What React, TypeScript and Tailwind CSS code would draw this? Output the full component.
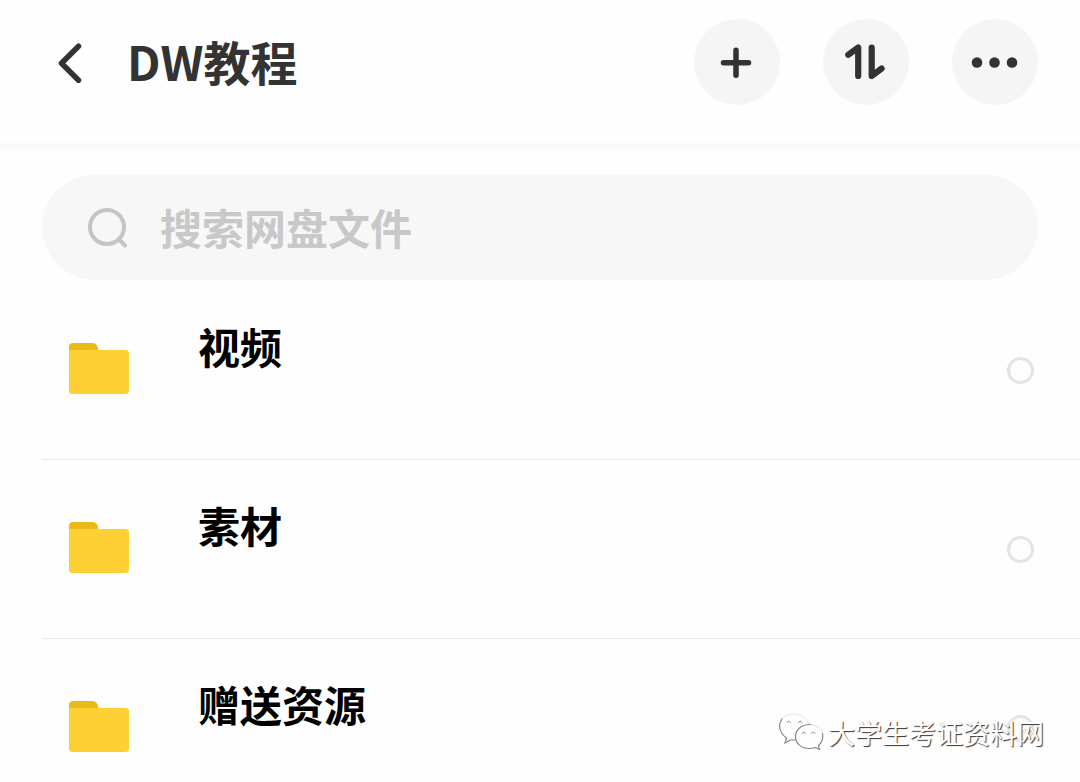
import { useState } from "react";

const folders = ["视频", "素材", "赠送资源"];

function FolderIcon() {
  return (
    <svg width="62" height="52" viewBox="0 0 62 52" className="mb-[3px] shrink-0">
      <path d="M1 14V4a4 4 0 0 1 4-4h19c3 0 4.500 1.200 5.500 3.500L32 14z" fill="#ebba16" />
      <path d="M1 7h56.500a3.500 3.500 0 0 1 3.500 3.500V47.500a3.500 3.500 0 0 1-3.500 3.500h-53A3.500 3.500 0 0 1 1 47.500z" fill="#ffd033" />
    </svg>
  );
}

function Header() {
  return (
    <header className="flex h-[142px] shrink-0 items-start justify-between pl-[53px] pr-[42px] pt-[19px]">
      <div className="flex h-[86px] items-center">
        <button type="button" className="mt-[2px]">
          <svg width="36" height="44" viewBox="0 0 36 44" fill="none" stroke="#333" strokeWidth="5.500" strokeLinecap="round" strokeLinejoin="round">
            <path d="M25.500 5.200 8.500 22.200l17 17" />
          </svg>
        </button>
        <h1 className="mb-[3px] ml-[38px] text-[47px] leading-none font-bold text-[#333]">DW教程</h1>
      </div>
      <div className="flex gap-[43px]">
        <button type="button" className="size-[86px] rounded-full bg-[#f5f5f5]">
          <svg width="86" height="86" viewBox="0 0 86 86" fill="none" stroke="#333" strokeWidth="5.500" strokeLinecap="round">
            <path d="M29.500 43.700h25M42 31.200v25" />
          </svg>
        </button>
        <button type="button" className="size-[86px] rounded-full bg-[#f5f5f5]">
          <svg width="86" height="86" viewBox="0 0 86 86" fill="none" stroke="#333" strokeWidth="6.200" strokeLinecap="round" strokeLinejoin="round">
            <path d="M25.300 35.800l9.900-7.300v28.500M48.700 28.500v28.500l9.900-7.500" />
          </svg>
        </button>
        <button type="button" className="size-[86px] rounded-full bg-[#f5f5f5]">
          <svg width="86" height="86" viewBox="0 0 86 86" fill="#333">
            <circle cx="25" cy="43.500" r="5.300" />
            <circle cx="42.500" cy="43.500" r="5.300" />
            <circle cx="60" cy="43.500" r="5.300" />
          </svg>
        </button>
      </div>
    </header>
  );
}

function WechatMark() {
  // faint outer contour, darker on the lower-left edges
  return (
    <svg width="52" height="46" viewBox="0 0 52 46" fill="none" strokeLinecap="round">
      <path d="M10 9C13 5.500 17 4 21.500 4 29 4 35 8.500 37 14" stroke="#e4e4e4" />
      <path d="M10 9c-4 5.500-3.200 13.500 4.500 19l-1.500 5 5.500-3h5" stroke="#888" strokeWidth="1.200" />
      <path d="M37 14.500c7 0 12.500 3.500 13.500 9" stroke="#ddd" />
      <path d="M38.500 14.500C29 14.500 23.500 20 23.500 26.500c0 7 6 12 13.500 12 3 0 4.500-.4 6-1l4.500 2-1-4c3-2.500 5-6 4-12" stroke="#888" strokeWidth="1.200" />
      <path d="M15 12.500q1.700-3 3.500 0M26.500 12.500q1.700-3 3.500 0M30 23.500q1.700-3 3.500 0M39.500 23.500q1.700-3 3.500 0" stroke="#888" />
    </svg>
  );
}

export default function App() {
  const [selected, setSelected] = useState<string[]>([]);

  function toggle(name: string) {
    setSelected((s) => (s.includes(name) ? s.filter((n) => n !== name) : [...s, name]));
  }

  return (
    <div className="relative flex h-[782px] w-[1080px] flex-col overflow-hidden bg-[#fefefe] font-['Noto_Sans_CJK_SC',sans-serif]">
      <Header />
      <div className="h-2 shrink-0 bg-linear-to-b from-[#fcfcfc] via-[#f8f8f8] to-[#fdfdfd]" />

      {/* Search */}
      <label className="mx-[42px] mt-[25px] flex h-[105px] shrink-0 items-center rounded-full bg-[#f7f7f7] pl-11">
        <svg width="44" height="44" viewBox="0 0 44 44" fill="none" stroke="#c4c4c4" strokeWidth="4" strokeLinecap="round">
          <circle cx="21" cy="21" r="17" />
          <path d="M33.500 34l5.500 5.500" />
        </svg>
        <input
          type="text"
          placeholder="搜索网盘文件"
          className="mb-[2px] ml-[30px] h-16 w-[700px] bg-transparent text-[42px] font-bold outline-none placeholder:text-[#c8c8c8]"
        />
      </label>

      {/* Folder list */}
      <ul className="ml-[42px] mt-px">
        {folders.map((name) => (
          <li key={name} className="flex h-[179px] items-center border-b border-[#e8e8e8] pl-[26px] pr-[46px]">
            <FolderIcon />
            <span className="mb-[49px] ml-[68px] flex-1 text-[42px] leading-[62px] font-bold text-black">{name}</span>
            <button
              type="button"
              onClick={() => toggle(name)}
              className={`size-[27px] rounded-full border-3 border-[#e4e4e4] ${selected.includes(name) ? "bg-[#ffd033]" : "bg-transparent"}`}
            />
          </li>
        ))}
      </ul>

      {/* Watermark */}
      <div className="absolute left-[772px] top-[710px] flex items-center">
        <WechatMark />
        <span className="ml-[4px] text-[27px] leading-[46px] whitespace-nowrap text-white [text-shadow:1px_1px_1px_#333]">大学生考证资料网</span>
      </div>
    </div>
  );
}
